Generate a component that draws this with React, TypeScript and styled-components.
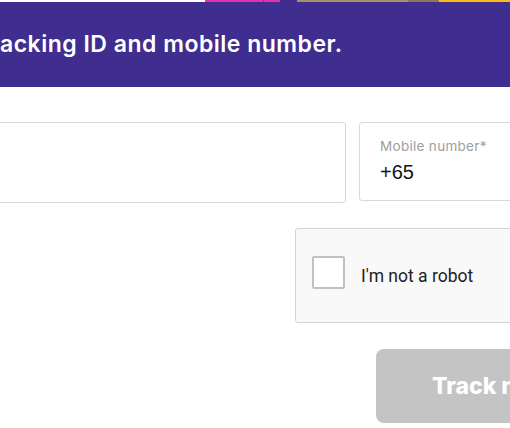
import styled, { createGlobalStyle } from "styled-components"

const GlobalStyle = createGlobalStyle`
  html, body {
    margin: 0;
    padding: 0;
    background: #fff;
    overflow: hidden;
  }
  body {
    width: 510px;
    height: 428px;
    font-family: Inter, "Noto Sans", sans-serif;
  }
`

const stripe = [
  { color: "#ffffff", width: 205 },
  { color: "#e62fa8", width: 58 },
  { color: "#8a2f8c", width: 1 },
  { color: "#e62fa8", width: 16 },
  { color: "#3f2e8f", width: 17 },
  { color: "#a88f69", width: 111 },
  { color: "#8e7658", width: 31 },
  { color: "#fbbd12", width: 72 },
]

function App() {
  return (
    <Page>
      <GlobalStyle />
      <Stripe>
        {stripe.map((s, i) => (
          <Segment key={i} $color={s.color} $width={s.width} />
        ))}
      </Stripe>
      <Banner>
        <h1>acking ID and mobile number.</h1>
      </Banner>
      <Form>
        <FieldRow>
          <Field $width={546} />
          <Field $width={220} $short>
            <label>Mobile number*</label>
            <span className="value">+65</span>
          </Field>
        </FieldRow>
        <CaptchaRow>
          <Captcha>
            <Checkbox />
            <span>I'm not a robot</span>
          </Captcha>
        </CaptchaRow>
        <ButtonRow>
          <TrackButton type="button" disabled>
            Track now
          </TrackButton>
        </ButtonRow>
      </Form>
    </Page>
  )
}

const Page = styled.div`
  width: 510px;
  height: 428px;
  overflow: hidden;
`

const Stripe = styled.div`
  display: flex;
  height: 2px;
`

const Segment = styled.div<{ $color: string; $width: number }>`
  flex: 0 0 ${(p) => p.$width}px;
  background: ${(p) => p.$color};
`

const Banner = styled.div`
  height: 85px;
  background: #3f2e8f;
  display: flex;
  align-items: center;

  h1 {
    margin: 0;
    padding: 0 0 1px 0;
    color: #fff;
    font-family: Inter, "Noto Sans", sans-serif;
    font-weight: 600;
    font-size: 23px;
    letter-spacing: 0.5px;
    white-space: nowrap;
  }
`

const Form = styled.div`
  display: flex;
  flex-direction: column;
  padding-top: 35px;
`

const FieldRow = styled.div`
  display: flex;
  gap: 13px;
  margin-left: -200px;
  align-items: flex-start;
`

const Field = styled.div<{ $width: number; $short?: boolean }>`
  flex: 0 0 ${(p) => p.$width}px;
  box-sizing: border-box;
  height: ${(p) => (p.$short ? 79 : 81)}px;
  border: 1px solid #d9d9d9;
  border-radius: 3px;
  padding: 15px 20px 0;
  display: flex;
  flex-direction: column;

  label {
    font-family: Inter, "Noto Sans", sans-serif;
    font-size: 13.5px;
    letter-spacing: 0.3px;
    color: #9e9e9e;
    line-height: 16px;
  }

  .value {
    margin-top: 7px;
    font-family: "Liberation Sans", Arial, sans-serif;
    font-size: 20px;
    color: #111;
    line-height: 22px;
  }
`

const CaptchaRow = styled.div`
  display: flex;
  padding: 25px 0 0 295px;
`

const Captcha = styled.div`
  flex: 0 0 300px;
  box-sizing: border-box;
  height: 95px;
  background: #f9f9f9;
  border: 1px solid #d3d3d3;
  border-radius: 3px;
  display: flex;
  align-items: center;
  gap: 16px;
  padding: 0 0 6px 16px;

  span {
    font-family: Roboto, "Noto Sans", sans-serif;
    font-size: 17.5px;
    color: #222;
    padding-top: 6px;
  }
`

const Checkbox = styled.div`
  width: 33px;
  height: 33px;
  box-sizing: border-box;
  background: #fff;
  border: 2px solid #c1c1c1;
  border-radius: 2px;
`

const ButtonRow = styled.div`
  display: flex;
  padding: 26px 0 0 376px;
`

const TrackButton = styled.button`
  flex: 0 0 220px;
  height: 74px;
  border: none;
  border-radius: 8px;
  background: #c4c4c4;
  color: #fff;
  font-family: Inter, "Noto Sans", sans-serif;
  font-weight: 800;
  font-size: 23px;
  text-align: left;
  padding: 0 0 0 56px;
`

export default App
